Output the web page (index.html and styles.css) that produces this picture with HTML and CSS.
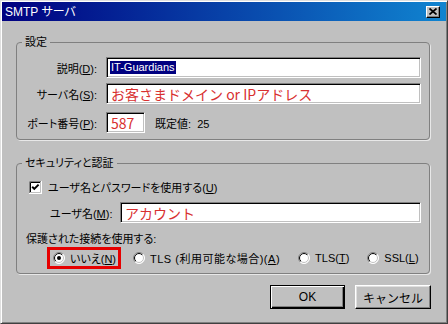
FILE: index.html
```html
<!DOCTYPE html>
<html lang="ja">
<head>
    <meta charset="UTF-8">
    <title>SMTP サーバ</title>
    <link rel="stylesheet" href="styles.css">
</head>
<body>
    <div class="window">
        <div class="titlebar">
            <span class="title">SMTP サーバ</span>
            <span class="close">
                <svg width="8" height="7" viewBox="0 0 8 7"><path d="M0.5 0.5 L7.5 6.5 M7.5 0.5 L0.5 6.5" stroke="#000" stroke-width="1.7" fill="none"/></svg>
            </span>
        </div>

        <div class="content">
            <fieldset class="group group-settings">
                <legend>設定</legend>
                <div class="field">
                    <label class="field-label">説明(<u>D</u>):</label>
                    <div class="edit edit-wide"><span class="selected">IT-Guardians</span></div>
                </div>
                <div class="field field-second">
                    <label class="field-label">サーバ名(<u>S</u>):</label>
                    <div class="edit edit-wide note">お客さまドメイン or IPアドレス</div>
                </div>
                <div class="field field-third">
                    <label class="field-label">ポート番号(<u>P</u>):</label>
                    <div class="edit edit-port note">587</div>
                    <span class="default-port">既定値:&nbsp; 25</span>
                </div>
            </fieldset>

            <fieldset class="group group-security">
                <legend>セキュリティと認証</legend>
                <div class="check-row">
                    <svg class="checkbox" width="13" height="13" viewBox="0 0 13 13">
                        <rect x="0" y="0" width="13" height="13" fill="#fff"/>
                        <path d="M0.5 12 V0.5 H12" stroke="#808080" fill="none"/>
                        <path d="M1.5 11 V1.5 H11" stroke="#000" fill="none"/>
                        <path d="M1 11.5 H11.5 V1" stroke="#c0c0c0" fill="none"/>
                        <path d="M0 12.5 H12.5 V0" stroke="#fff" fill="none"/>
                        <path d="M3.2 5.8 L5.3 7.9 L9.6 3.6" stroke="#000" stroke-width="2" fill="none"/>
                    </svg>
                    <span>ユーザ名とパスワードを使用する(<u>U</u>)</span>
                </div>
                <div class="user-row">
                    <label class="user-label">ユーザ名(<u>M</u>):</label>
                    <div class="edit edit-user note">アカウント</div>
                </div>
                <div class="secure-label">保護された接続を使用する:</div>
                <div class="radio-row">
                    <span class="option highlight">
                        <svg class="radio" width="12" height="12" viewBox="0 0 12 12">
                            <circle cx="6" cy="6" r="5.5" fill="#fff" stroke="url(#ringOuter)"/>
                            <circle cx="6" cy="6" r="4.5" fill="none" stroke="url(#ringInner)"/>
                            <circle cx="6" cy="6" r="2" fill="#000"/>
                        </svg>
                        <span>いいえ(<u>N</u>)</span>
                    </span>
                    <span class="option option-wide">
                        <svg class="radio" width="12" height="12" viewBox="0 0 12 12">
                            <circle cx="6" cy="6" r="5.5" fill="#fff" stroke="url(#ringOuter)"/>
                            <circle cx="6" cy="6" r="4.5" fill="none" stroke="url(#ringInner)"/>
                        </svg>
                        <span>TLS (利用可能な場合)(<u>A</u>)</span>
                    </span>
                    <span class="option">
                        <svg class="radio" width="12" height="12" viewBox="0 0 12 12">
                            <circle cx="6" cy="6" r="5.5" fill="#fff" stroke="url(#ringOuter)"/>
                            <circle cx="6" cy="6" r="4.5" fill="none" stroke="url(#ringInner)"/>
                        </svg>
                        <span>TLS(<u>T</u>)</span>
                    </span>
                    <span class="option">
                        <svg class="radio" width="12" height="12" viewBox="0 0 12 12">
                            <circle cx="6" cy="6" r="5.5" fill="#fff" stroke="url(#ringOuter)"/>
                            <circle cx="6" cy="6" r="4.5" fill="none" stroke="url(#ringInner)"/>
                        </svg>
                        <span>SSL(<u>L</u>)</span>
                    </span>
                </div>
            </fieldset>

            <div class="buttons">
                <button type="button" class="btn btn-default">OK</button>
                <button type="button" class="btn">キャンセル</button>
            </div>
        </div>
    </div>

    <svg class="defs" width="0" height="0">
        <defs>
            <linearGradient id="ringOuter" x1="0" y1="0" x2="1" y2="1">
                <stop offset="0.5" stop-color="#808080"/>
                <stop offset="0.5" stop-color="#fff"/>
            </linearGradient>
            <linearGradient id="ringInner" x1="0" y1="0" x2="1" y2="1">
                <stop offset="0.5" stop-color="#000"/>
                <stop offset="0.5" stop-color="#c0c0c0"/>
            </linearGradient>
        </defs>
    </svg>
</body>
</html>
```

FILE: styles.css
```css
body {
    margin: 0;
    font-family: "Liberation Sans", "Noto Sans CJK JP", sans-serif;
    font-size: 11px;
    font-feature-settings: "palt";
    color: #000;
}
.window {
    width: 448px;
    height: 324px;
    box-sizing: border-box;
    padding: 1px;
    background-color: #c0c0c0;
    border: 1px solid;
    border-color: #dfdfdf #404040 #404040 #dfdfdf;
    box-shadow: inset 1px 1px 0 #fff, inset -1px -1px 0 #808080;
}
.titlebar {
    height: 19px;
    display: flex;
    align-items: center;
    justify-content: space-between;
    padding: 0 6px 0 3px;
    background: linear-gradient(to right, #000080, #1084d0);
    color: #fff;
}
.title {
    font-size: 12px;
    line-height: 14px;
}
.close {
    width: 14px;
    height: 12px;
    box-sizing: border-box;
    display: flex;
    align-items: center;
    justify-content: center;
    background-color: #c0c0c0;
    border: 1px solid;
    border-color: #fff #000 #000 #fff;
    box-shadow: inset -1px -1px 0 #808080;
}
.content {
    padding: 14px 16px 0 14px;
}
.group {
    margin: 0;
    padding: 0;
    min-width: 0;
    border: 1px solid #808080;
    border-radius: 4px;
    box-shadow: 1px 1px 0 #e8e8e8;
}
.group legend {
    margin-left: 5px;
    padding: 0 3px;
    height: 14px;
    line-height: 14px;
}
.group-settings {
    padding: 8px 0 6px 0;
}
.group-security {
    margin-top: 16px;
    padding: 9px 0 4px 0;
}
.field {
    display: flex;
    align-items: center;
    height: 21px;
}
.field-second {
    margin-top: 5px;
}
.field-third {
    margin-top: 8px;
}
.field-label {
    width: 80px;
    margin-right: 9px;
    text-align: right;
}
.edit {
    height: 21px;
    box-sizing: border-box;
    display: flex;
    align-items: center;
    padding-left: 3px;
    background-color: #fff;
    border: 1px solid;
    border-color: #808080 #fff #fff #808080;
    box-shadow: inset 1px 1px 0 #000, inset -1px -1px 0 #c0c0c0;
    white-space: nowrap;
}
.edit-wide {
    width: 315px;
}
.edit-port {
    width: 39px;
}
.edit-user {
    width: 301px;
}
.note {
    padding-left: 4px;
    font-family: "Noto Sans CJK JP", sans-serif;
    font-size: 14px;
    font-feature-settings: normal;
    color: #d83030;
}
.selected {
    padding: 0 1px;
    line-height: 13px;
    background-color: #000080;
    color: #fff;
}
.default-port {
    margin-left: 10px;
}
.check-row {
    display: flex;
    align-items: center;
    gap: 6px;
    height: 16px;
    padding-left: 12px;
}
.user-row {
    display: flex;
    align-items: center;
    height: 21px;
    margin-top: 7px;
    padding-left: 33px;
}
.user-label {
    width: 70px;
}
.secure-label {
    margin-top: 9px;
    padding-left: 9px;
    height: 14px;
    line-height: 14px;
}
.radio-row {
    display: flex;
    align-items: center;
    gap: 18px;
    height: 22px;
    margin-top: 1px;
    padding-left: 30px;
}
.option {
    display: flex;
    align-items: center;
    gap: 5px;
    white-space: nowrap;
}
.option-wide span {
    letter-spacing: 0.5px;
}
.highlight {
    height: 22px;
    box-sizing: border-box;
    padding: 0 2px 0 3px;
    margin-right: -6px;
    border: 3px solid #e60000;
}
.buttons {
    display: flex;
    justify-content: flex-end;
    gap: 10px;
    margin-top: 11px;
    margin-right: -1px;
}
.btn {
    width: 76px;
    height: 24px;
    padding: 0;
    font-family: inherit;
    font-size: 12px;
    color: #000;
    background-color: #c0c0c0;
    border: 1px solid;
    border-color: #fff #000 #000 #fff;
    box-shadow: inset -1px -1px 0 #808080, inset 1px 1px 0 #dfdfdf;
}
.btn-default {
    width: 75px;
    border-color: #000;
    box-shadow: inset 1px 1px 0 #fff, inset -1px -1px 0 #000, inset -2px -2px 0 #808080;
}
.defs {
    display: block;
    height: 0;
}
```
